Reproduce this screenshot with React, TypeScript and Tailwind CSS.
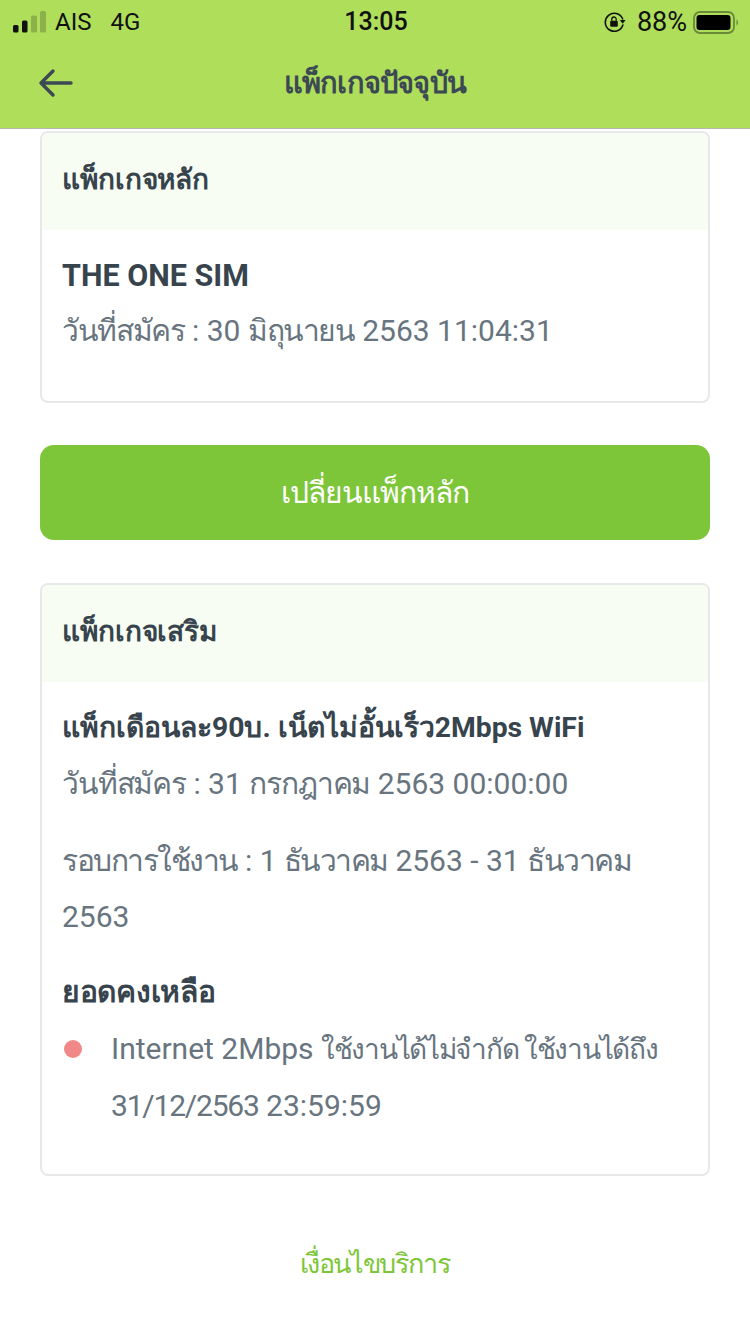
import React from 'react';

const font = "font-['Roboto','Noto_Sans','Liberation_Sans',sans-serif]";

// Thai runs are wider here than in the app's font, so they get tighter tracking than the digits
const Th = ({ children, className = 'tracking-[-1.15px]' }: { children: React.ReactNode; className?: string }) => (
  <span className={className}>{children}</span>
);

const Signal = () => (
  <svg width="34" height="22" viewBox="0 0 34 22" className="block">
    <rect x="0" y="14" width="5.500" height="7.500" rx="1.500" fill="#111" />
    <rect x="9" y="9.500" width="5.500" height="12" rx="1.500" fill="#111" />
    <rect x="18" y="4.500" width="6" height="17" rx="1.500" fill="#8bb24a" />
    <rect x="27" y="0" width="6" height="21.500" rx="1.500" fill="#8bb24a" />
  </svg>
);

const RotationLock = () => (
  <svg width="22" height="20" viewBox="0 0 22 20" fill="none" className="block">
    <path d="M18.600 6.800A9 9 0 1 0 18.900 13" stroke="#111" strokeWidth="1.600" strokeLinecap="round" />
    <path d="M15.800 8h5.800l-2.900 3.800z" fill="#111" />
    <rect x="6.200" y="8.800" width="7.600" height="6" rx="1" fill="#111" />
    <path d="M7.800 8.800V7.200a2.200 2.200 0 0 1 4.400 0v1.600" stroke="#111" strokeWidth="1.300" />
  </svg>
);

const Battery = () => (
  <svg width="46" height="23" viewBox="0 0 46 23" className="block">
    <rect x="1" y="1" width="40" height="21" rx="6" fill="none" stroke="#6a8a3a" strokeWidth="1.800" />
    <rect x="3.500" y="4" width="34" height="15" rx="3" fill="#000" />
    <path d="M43.500 8.500v6c1-.5 1.500-1.700 1.500-3s-.5-2.500-1.500-3z" fill="#6a8a3a" />
  </svg>
);

const Card = ({ title, children }: { title: string; children: React.ReactNode }) => (
  <section className="rounded-[8px] border-2 border-[#e8e8e8] overflow-hidden bg-white">
    <h2 className="h-[97px] bg-[#f7fdf2] px-[20px] pt-[27px] text-[28px] tracking-[-0.1px] leading-[40px] font-bold text-[#37444d]">{title}</h2>
    {children}
  </section>
);

export default function App() {
  return (
    <div className={`w-[750px] h-[1334px] bg-white overflow-hidden ${font}`}>
      <header className="h-[129px] bg-[#aede5a] border-b border-[#b5b8ae]">
        <div className="h-[40px] pl-[13px] pr-[11px] pt-[2px] grid grid-cols-[1fr_auto_1fr] items-center text-[#111]">
          <div className="flex items-center text-[24px]">
            <Signal />
            <span className="ml-[8px]">AIS</span>
            <span className="ml-[19px]">4G</span>
          </div>
          <span className="text-[25px] font-medium leading-[34px]">13:05</span>
          <div className="flex items-center justify-end text-[27px]">
            <RotationLock />
            <span className="ml-[11px]">88%</span>
            <span className="ml-[6px]"><Battery /></span>
          </div>
        </div>
        <div className="h-[88px] pl-[38px] pb-[3px] grid grid-cols-[1fr_auto_1fr] items-center">
          <svg width="36" height="30" viewBox="0 0 36 30" fill="none" className="block">
            <path d="M33 15H3M15 3 3 15l12 12" stroke="#3c4854" strokeWidth="3.400" strokeLinecap="round" strokeLinejoin="round" />
          </svg>
          <h1 className="-ml-[38px] text-[29px] tracking-[-0.8px] font-bold text-[#3c4854] leading-[40px]">แพ็กเกจปัจจุบัน</h1>
          <span />
        </div>
      </header>

      <main className="px-[40px] pt-[2px]">
        <Card title="แพ็กเกจหลัก">
          <div className="h-[171px] px-[20px] pt-[26px]">
            <p className="text-[30.500px] leading-[40px] font-bold text-[#37444d]">THE ONE SIM</p>
            <p className="mt-[15px] text-[30px] leading-[40px] text-[#68757f]"><Th className="tracking-[-1.35px]">วันที่สมัคร</Th> : 30 <Th className="tracking-[-1.35px]">มิถุนายน</Th> 2563 11:04:31</p>
          </div>
        </Card>

        <button className={`mt-[42px] w-full h-[95px] rounded-[14px] bg-[#7dc639] text-white text-[30px] tracking-[-1px] font-medium flex items-center justify-center ${font}`}>
          เปลี่ยนแพ็กหลัก
        </button>

        <div className="mt-[43px]">
          <Card title="แพ็กเกจเสริม">
            <div className="h-[492px] px-[20px] pt-[26px]">
              <p className="text-[28.300px] leading-[40px] font-bold text-[#37444d]">แพ็กเดือนละ90บ. เน็ตไม่อั้นเร็ว2Mbps WiFi</p>
              <p className="mt-[16px] text-[30px] leading-[40px] text-[#68757f]"><Th>วันที่สมัคร</Th> : 31 <Th>กรกฎาคม</Th> 2563 00:00:00</p>
              <p className="mt-[29px] text-[30px] leading-[56px] text-[#68757f]"><Th className="tracking-[-1.5px]">รอบการใช้งาน</Th> : 1 <Th className="tracking-[-1.5px]">ธันวาคม</Th> 2563 - 31 <Th className="tracking-[-1.5px]">ธันวาคม</Th> 2563</p>
              <p className="mt-[27px] text-[30px] tracking-[-0.3px] leading-[40px] font-bold text-[#37444d]">ยอดคงเหลือ</p>
              <div className="mt-[9px] flex">
                <span className="w-[18px] h-[18px] rounded-full bg-[#f08888] mt-[19px] ml-[2px] shrink-0" />
                <p className="ml-[29px] text-[30px] leading-[56px] text-[#68757f]">Internet 2Mbps <Th className="text-[28px] tracking-[-1.3px]">ใช้งานได้ไม่จำกัด ใช้งานได้ถึง</Th> <Th className="tracking-[-1.2px]">31/12/2563</Th> 23:59:59</p>
              </div>
            </div>
          </Card>
        </div>

        <p className="mt-[68px] text-center text-[27px] tracking-[-1.4px] leading-[40px] font-medium text-[#7dc639]">เงื่อนไขบริการ</p>
      </main>
    </div>
  );
}
